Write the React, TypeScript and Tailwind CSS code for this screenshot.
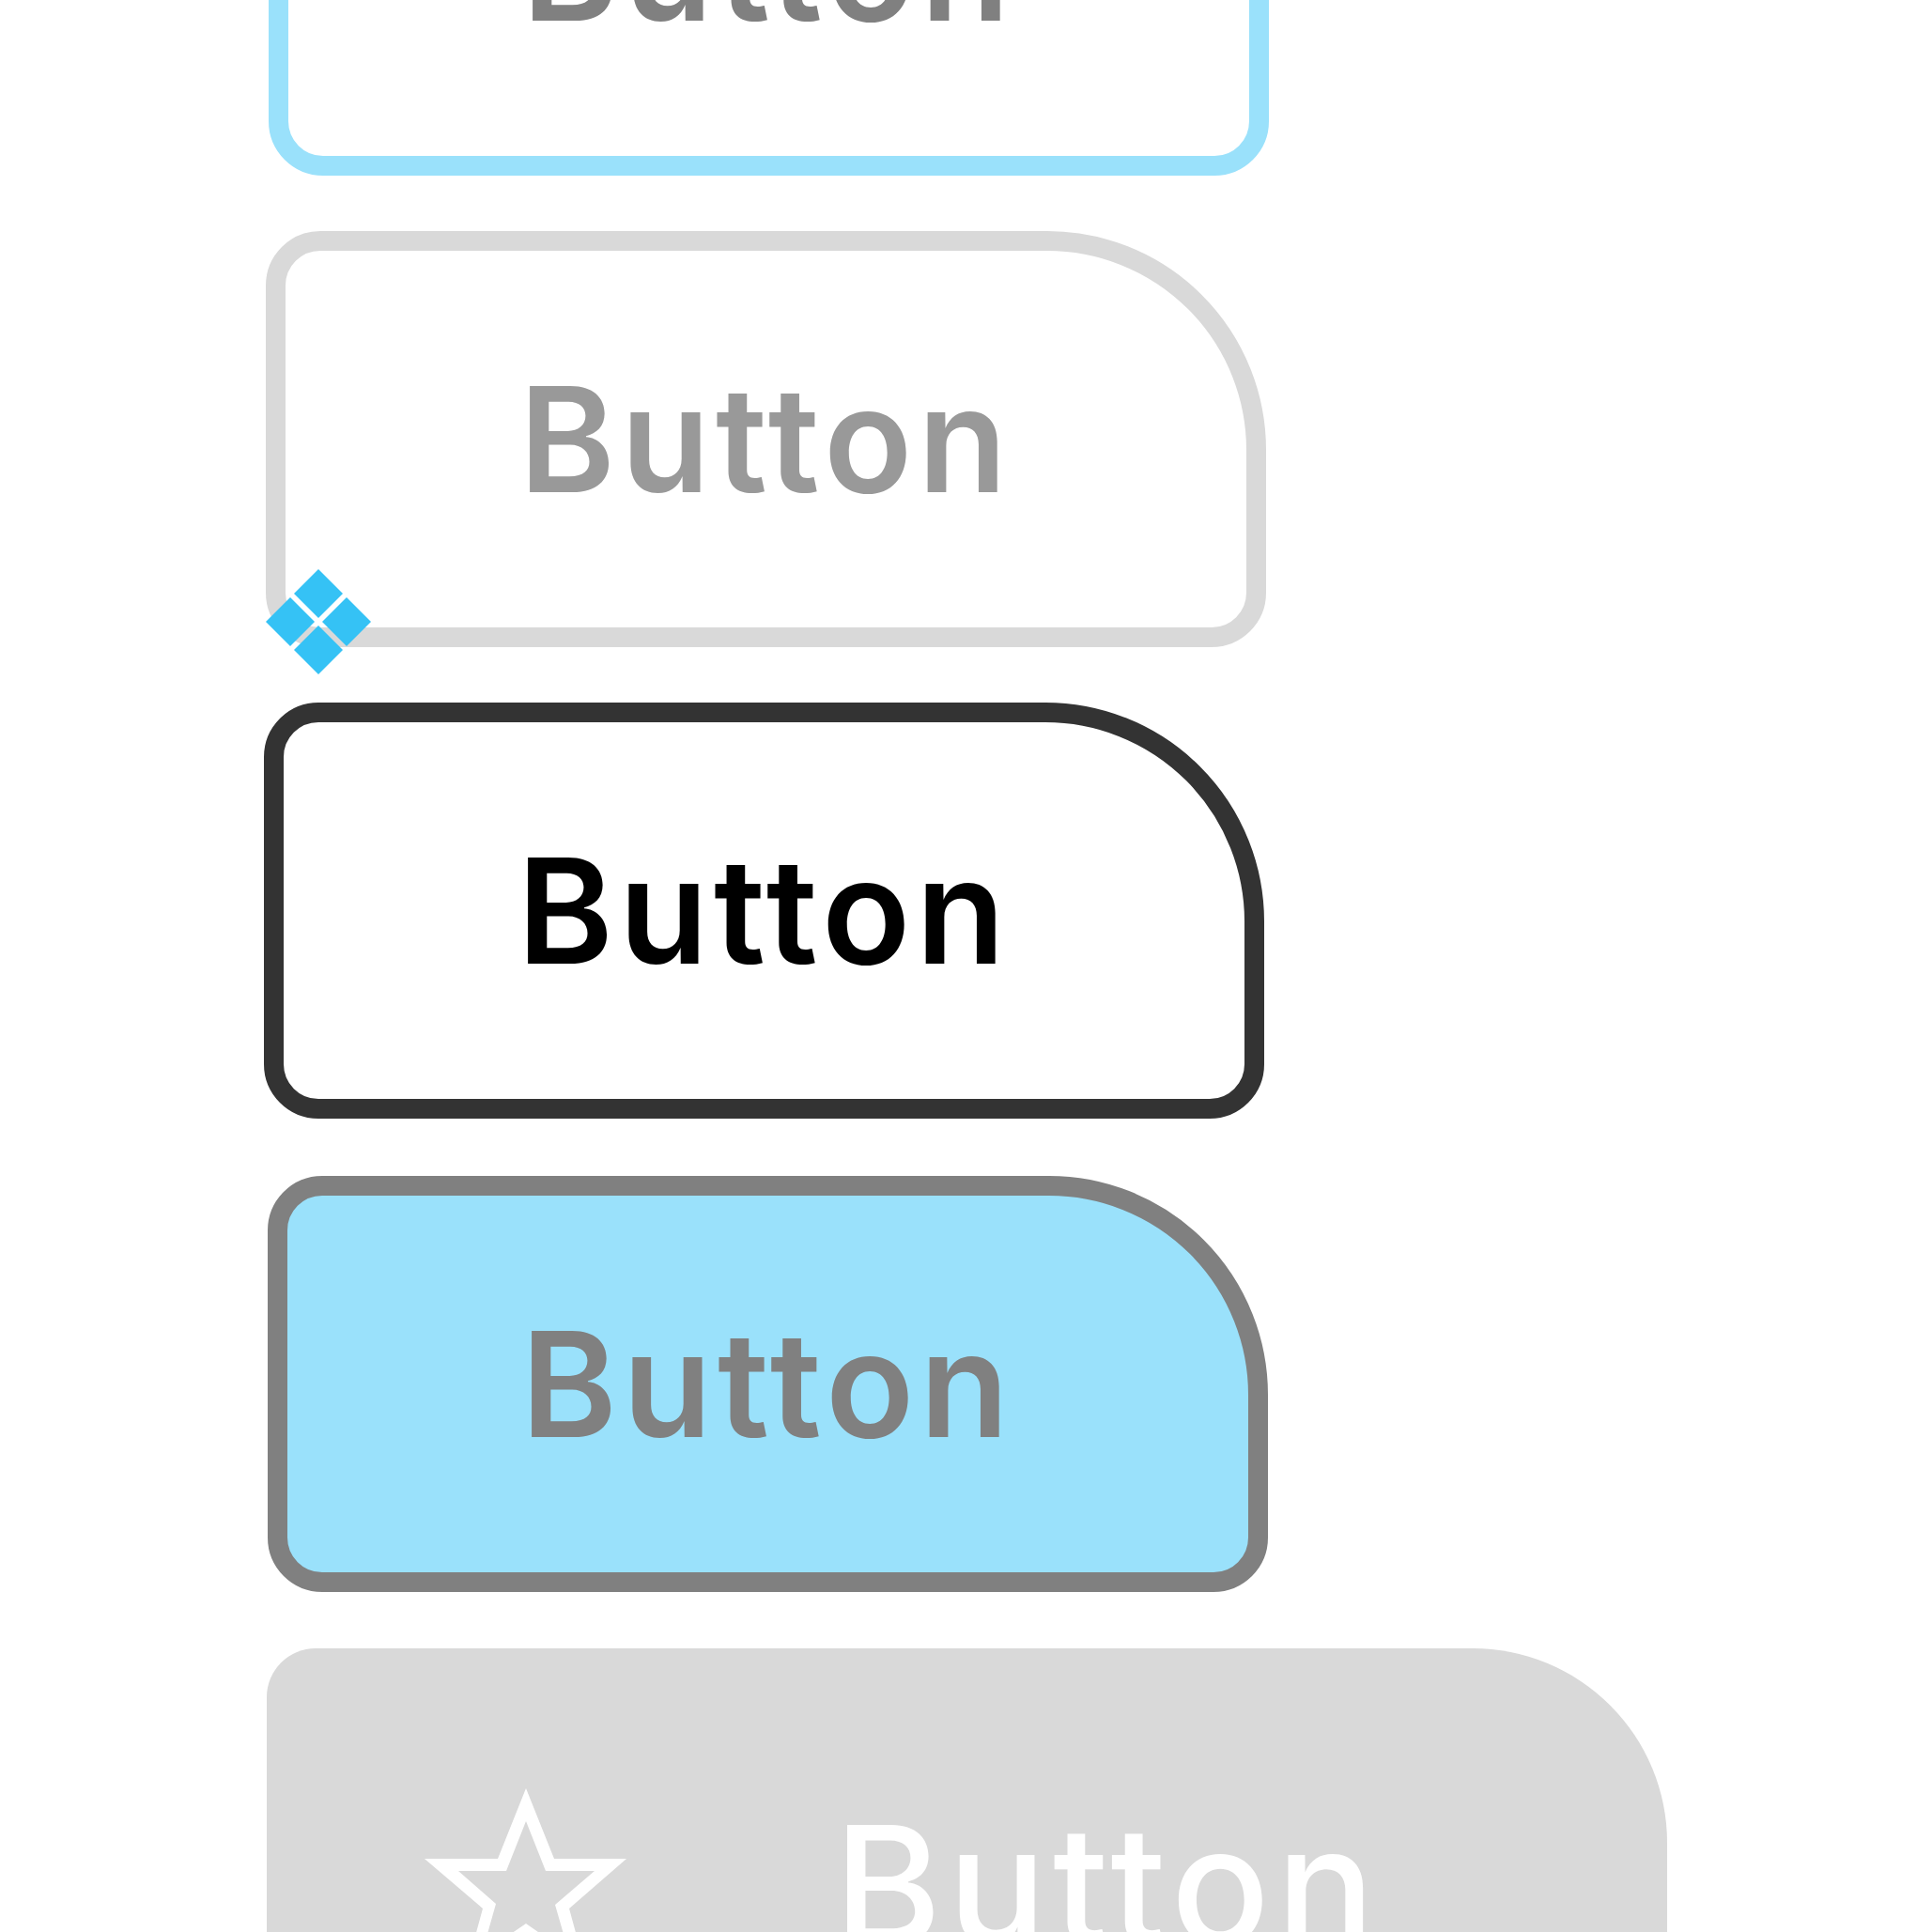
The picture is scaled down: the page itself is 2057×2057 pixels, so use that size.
export default function App() {
  const text = "font-['Inter',sans-serif] font-semibold text-[155px] leading-none tracking-[6px]";
  return (
    <div className="h-[2057px] w-[2057px] overflow-hidden bg-white">
      <div className="flex flex-col items-start -mt-[256px]">
        <button className="flex items-center justify-center w-[1065px] h-[443px] ml-[286px] border-[21px] border-[#9ae1fb] bg-white rounded-tl-[58px] rounded-tr-[233px] rounded-br-[58px] rounded-bl-[58px] text-[#808080]">
          <span className={text}>Button</span>
        </button>
        <button className="relative flex items-center justify-center w-[1065px] h-[443px] mt-[59px] ml-[283px] border-[21px] border-[#d9d9d9] bg-white rounded-tl-[58px] rounded-tr-[233px] rounded-br-[58px] rounded-bl-[58px] text-[#999999]">
          <span className={text}>Button</span>
          <svg className="absolute left-[-21px] top-[339px]" width="112" height="113" viewBox="0 0 112 113">
            <g fill="#35c2f5">
              <path d="M56 0 L82 26 L56 52 L30 26 Z" />
              <path d="M26 30 L52 56 L26 82 L0 56 Z" />
              <path d="M86 30 L112 56 L86 82 L60 56 Z" />
              <path d="M56 60 L82 86 L56 112 L30 86 Z" />
            </g>
          </svg>
        </button>
        <button className="flex items-center justify-center w-[1065px] h-[443px] mt-[59px] ml-[281px] border-[21px] border-[#333333] bg-white rounded-tl-[58px] rounded-tr-[233px] rounded-br-[58px] rounded-bl-[58px] text-black">
          <span className={text}>Button</span>
        </button>
        <button className="flex items-center justify-center w-[1065px] h-[443px] mt-[61px] ml-[285px] border-[21px] border-[#808080] bg-[#9ae1fb] rounded-tl-[58px] rounded-tr-[233px] rounded-br-[58px] rounded-bl-[58px] text-[#808080]">
          <span className={text}>Button</span>
        </button>
        <button className="flex items-center w-[1491px] h-[503px] mt-[60px] ml-[284px] pl-[168px] gap-[221px] bg-[#d9d9d9] rounded-tl-[52px] rounded-tr-[207px] text-white">
          <svg width="215" height="205" viewBox="0 0 215 205" className="shrink-0">
            <path
              fillRule="evenodd"
              fill="#ffffff"
              d="M108 0 L138 75 L215 75 L154 128 L175 205 L108 164 L41 205 L62 128 L0 75 L78 75 Z M108 35 L87 88 L36 88 L76 123 L61 176 L108 144 L154 176 L139 124 L181 88 L129 88 Z"
            />
          </svg>
          <span className="font-['Inter',sans-serif] font-medium text-[174px] leading-none tracking-[7px]">Button</span>
        </button>
      </div>
    </div>
  );
}
